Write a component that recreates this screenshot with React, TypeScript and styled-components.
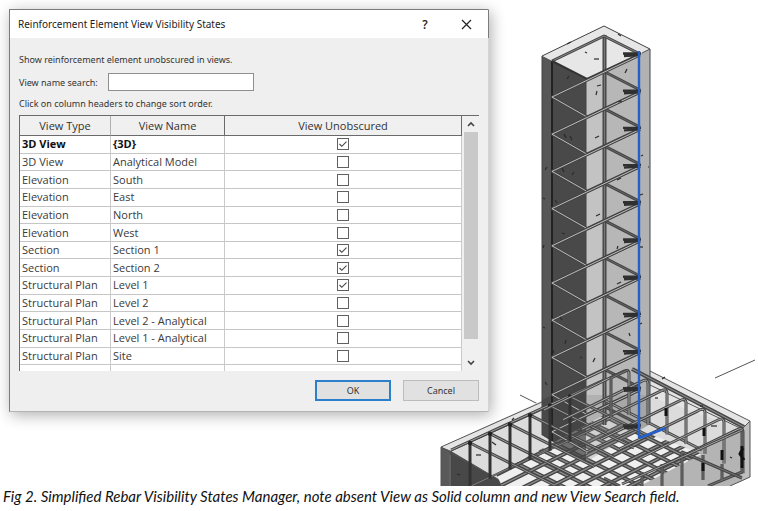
import React, { useState } from "react";
import styled, { createGlobalStyle } from "styled-components";

const GlobalStyle = createGlobalStyle`
  * { box-sizing: border-box; }
  body { margin: 0; background: #fff; }
`;

const Figure = styled.figure`
  margin: 0;
  overflow: hidden;
`;

const Stage = styled.div`
  display: grid;
  grid-template-columns: minmax(0, 1fr);
`;

const Drawing = styled.svg`
  grid-area: 1 / 1;
  justify-self: end;
  display: block;
  width: 358px;
  height: 486px;
`;

const Dialog = styled.section`
  grid-area: 1 / 1;
  align-self: start;
  z-index: 1;
  width: calc(100% - 18px);
  max-width: 480px;
  margin: 9px;
  border: 1px solid #7c7c7c;
  border-right-color: #d4d4d4;
  border-bottom-color: #b4b4b4;
  background: #efefef;
  box-shadow: 2px 3px 14px rgba(0, 0, 0, 0.32);
  font-family: "Noto Sans", "Open Sans", sans-serif;
  color: #333;
`;

const TitleBar = styled.header`
  display: flex;
  align-items: center;
  height: 28px;
  padding: 0 8px;
  margin-right: -1px;
  border-right: 1px solid #7c7c7c;
  background: #fff;
`;

const Title = styled.h1`
  flex: 1;
  margin: 0;
  font-size: 10px;
  line-height: 16px;
  font-weight: 400;
  color: #1c1c1c;
`;

const TitleButton = styled.button`
  display: grid;
  place-items: center;
  width: 28px;
  height: 24px;
  margin-left: 13px;
  padding: 0;
  border: 0;
  background: none;
  color: #222;
  font: 600 12px "Open Sans", sans-serif;
`;

const Body = styled.div`
  display: flex;
  flex-direction: column;
  padding: 14px 9px 10px;
`;

const Note = styled.p`
  margin: 0;
  font-size: 9px;
  line-height: 16px;
`;

const SearchRow = styled.div`
  display: flex;
  align-items: center;
  gap: 10px;
  height: 28px;
  font-size: 9px;
`;

const SearchInput = styled.input`
  width: 146px;
  height: 18px;
  padding: 0 4px;
  border: 1px solid #8f8f8f;
  background: #fff;
  font: inherit;
`;

const ListFrame = styled.div`
  display: flex;
  height: 256px;
  margin-top: 3px;
  overflow: hidden;
  border-top: 1px solid #6a6a6a;
  border-left: 1px solid #6a6a6a;
  background: #fff;
`;

const Table = styled.table`
  flex: 1;
  height: 267px;
  border-collapse: separate;
  border-spacing: 0;
  table-layout: fixed;
  font-family: "Open Sans", sans-serif;
  font-size: 11px;
  line-height: 14px;
`;

const HeadCell = styled.th<{ $width?: number; $light?: boolean }>`
  width: ${(p) => (p.$width ? `${p.$width}px` : "auto")};
  height: 20px;
  padding: 0;
  border-right: 1px solid ${(p) => (p.$light ? "#b0b0b0" : "#6a6a6a")};
  border-bottom: 1px solid #6a6a6a;
  background: #f0f0f0;
  font-weight: 400;
`;

const Row = styled.tr<{ $strong?: boolean }>`
  font-weight: ${(p) => (p.$strong ? 700 : 400)};
  color: ${(p) => (p.$strong ? "#111" : "#3a3a3a")};
`;

const Cell = styled.td<{ $center?: boolean }>`
  height: 17px;
  padding: 0 2px;
  border-right: 1px solid #cbcbcb;
  border-bottom: 1px solid #c6c6c6;
  text-align: ${(p) => (p.$center ? "center" : "left")};
  white-space: nowrap;
`;

const Check = styled.input`
  appearance: none;
  display: block;
  width: 12px;
  height: 12px;
  margin: 0 auto;
  border: 1px solid #606060;
  background: #fff;
  &:checked {
    background: #fff
      url("data:image/svg+xml,%3Csvg xmlns='http://www.w3.org/2000/svg' viewBox='0 0 10 10'%3E%3Cpath d='M1.5 5l2.3 2.3L8.5 2.6' fill='none' stroke='%23444' stroke-width='1.1'/%3E%3C/svg%3E");
  }
`;

const ScrollBar = styled.div`
  display: flex;
  flex-direction: column;
  width: 17px;
  padding: 0 1px 0 2px;
  background: #f0f0f0;
`;

const ScrollButton = styled.button`
  display: grid;
  place-items: center;
  height: 16px;
  padding: 0;
  border: 0;
  background: none;
`;

const ScrollTrack = styled.div`
  flex: 1;
`;

const ScrollThumb = styled.div`
  height: 93%;
  background: #c9c9c9;
`;

const Actions = styled.footer`
  display: flex;
  justify-content: flex-end;
  gap: 12px;
  margin-top: 9px;
`;

const ActionButton = styled.button<{ $primary?: boolean }>`
  width: 76px;
  height: 21px;
  padding: 0;
  border: ${(p) => (p.$primary ? "2px solid #2b7fcb" : "1px solid #bcbcbc")};
  background: #e1e1e1;
  color: #333;
  font: 9px "Noto Sans", sans-serif;
`;

const Caption = styled.figcaption`
  padding: 0 3px;
  font: italic 15px/20px Lato, "Open Sans", sans-serif;
  color: #111;
`;

const views = [
  { type: "3D View", name: "{3D}", on: true, strong: true },
  { type: "3D View", name: "Analytical Model", on: false },
  { type: "Elevation", name: "South", on: false },
  { type: "Elevation", name: "East", on: false },
  { type: "Elevation", name: "North", on: false },
  { type: "Elevation", name: "West", on: false },
  { type: "Section", name: "Section 1", on: true },
  { type: "Section", name: "Section 2", on: true },
  { type: "Structural Plan", name: "Level 1", on: true },
  { type: "Structural Plan", name: "Level 2", on: false },
  { type: "Structural Plan", name: "Level 2 - Analytical", on: false },
  { type: "Structural Plan", name: "Level 1 - Analytical", on: false },
  { type: "Structural Plan", name: "Site", on: false },
];

const range = (n: number) => Array.from({ length: n }, (_, i) => i);

function Bar({ d, w = 3, core = "#a2a2a2" }: { d: string; w?: number; core?: string }) {
  return (
    <>
      <path d={d} fill="none" stroke="#444" strokeWidth={w} strokeLinejoin="round" />
      <path d={d} fill="none" stroke={core} strokeWidth={w / 3} strokeLinejoin="round" />
    </>
  );
}

const specks = [
  [567, 44, 4, -2], [585, 52, 2, 1], [594, 59, 5, 0], [618, 34, 3, 2], [625, 73, 2, -4],
  [567, 79, 2, -3], [597, 86, 4, -1], [596, 95, 1, -4], [618, 102, 4, -1], [564, 134, 2, 4],
  [570, 136, 2, 4], [595, 138, 4, -2], [545, 170, 2, -3], [562, 168, 2, 4], [572, 175, 2, -3],
  [617, 180, 4, -2], [543, 198, 2, 1], [555, 200, 2, 3], [596, 216, 4, -2], [562, 233, 3, 1],
  [543, 248, 1, -3], [617, 249, 1, -3], [617, 284, 4, -2], [560, 317, 2, 3], [543, 327, 2, 1],
  [629, 333, 1, 3], [565, 344, 1, -4], [593, 362, 2, -4], [553, 350, 1, 3], [545, 382, 2, 3],
  [641, 156, 2, -1], [640, 195, 3, -1], [640, 247, 3, 0], [640, 324, 2, -1], [648, 167, 1, 0],
  [492, 442, 4, 3], [512, 420, 2, -2], [476, 455, 5, 0], [662, 379, 3, -2], [700, 406, 3, 0],
  [711, 426, 6, 0], [730, 457, 2, 1], [655, 398, 3, 0], [457, 474, 3, 1], [580, 357, 2, 1],
];

function RebarDrawing() {
  return (
    <Drawing viewBox="400 0 358 486" role="img" aria-label="Reinforced concrete column and footing">
      <defs>
        <clipPath id="floor">
          <path d="M502 486 L496 474 L602 416 L702 454 L640 486Z" />
        </clipPath>
      </defs>

      {/* level lines */}
      <path d="M520 395 L542 406 M715 378 L755 360" stroke="#555" fill="none" />

      {/* footing faces */}
      <path d="M441 447 L604 372 L650 371 L750 421 V477 L730 486 H441Z" fill="#e4e4e4" />
      <path d="M451 450 L604 380 L742 429 L620 486 H500Z" fill="#dcdcdc" />
      <path d="M441 447 L451 451 L510 486 H441Z" fill="#484848" />
      <path d="M441 447 L451 451 V486 H441Z" fill="#595959" />
      <path d="M742 429 L742 481 L730 486 H622Z" fill="#b4b4b4" />
      <path d="M742 429 L750 421 V477 L742 481Z" fill="#bebebe" />
      <path d="M441 486 V447 L542 402 M650 371 L750 421 V477 L730 486 M441 447 L510 486 M750 421 L742 429 L650 385" stroke="#555" fill="none" />
      <path d="M451 486 V451 L542 410" stroke="#444" fill="none" />

      {/* column faces */}
      <path d="M542 56 L604 26 L650 49 V424 L586 462 L542 435Z" fill="#b7b7b7" />
      <path d="M542 56 L604 26 L650 49 L587 79Z" fill="#e7e7e7" />
      <path d="M640 54 L650 49 V424 L640 430Z" fill="#b2b2b2" />
      <path d="M586 79 L604 70 V452 L586 462Z" fill="#c3c3c3" />
      <path d="M542 56 L586 79 V462 L542 435Z" fill="#494949" />
      <path d="M542 56 L552 61 V441 L542 435Z" fill="#575757" />
      <path d="M542 435 V56 L604 26 L650 49 V424 M586 79 V462" stroke="#444" fill="none" />
      <path d="M642 53 L650 49" stroke="#555" fill="none" />

      {/* bottom mesh */}
      <g clipPath="url(#floor)">
        <path d="M440 400 H760 V486 H440Z" fill="#efefef" />
        {range(18).map((i) => (
          <g key={i}>
            <Bar d={`M${310 + i * 26} 360 L${570 + i * 26} 490`} w={4} core="#8c8c8c" />
            <Bar d={`M${960 - i * 26} 360 L${700 - i * 26} 490`} w={4} core="#8c8c8c" />
          </g>
        ))}
      </g>
      <path d="M542 400 L586 380 V462 L542 435Z" fill="#444" opacity="0.75" />
      <path d="M586 395 H650 V424 L586 462Z" fill="#888" opacity="0.3" />

      {/* column cage */}
      <path d="M552 61 V441" stroke="#222" strokeWidth="2" />
      <Bar d="M604.5 35 V425" w={4} core="#777" />
      <Bar d="M552 61 L604 36 L640 54" w={3} core="#888" />
      <path d="M552 61 L587 79 L640 54" stroke="#333" strokeWidth="2" fill="none" />
      {range(10).map((i) => {
        const y = i * 37.2;
        return (
          <g key={i}>
            <Bar d={`M605 ${72 + y} L640 ${90 + y}`} core="#666" />
            <Bar d={`M587 ${117 + y} L552 ${97 + y} L640 ${55 + y}`} core="#bdbdbd" />
            <Bar d={`M587 ${117 + y} L640 ${92 + y}`} core="#999" />
          </g>
        );
      })}

      {/* left edge cage */}
      <Bar d="M451 450 L604 380" />
      <Bar d="M450 486 V455 M471 486 L600 426" w={2} />
      {range(6).map((i) => {
        const x = 470 + i * 20;
        const y = 443 - i * 9.3;
        return (
          <g key={i}>
            <Bar d={`M${x} ${y} L${x + 84} ${y + 42}`} w={3} core="#999" />
            <path d={`M${x} ${y} V${y + 45}`} stroke="#333" strokeWidth="3" />
            <circle cx={x} cy={y} r="2.2" fill="#222" />
          </g>
        );
      })}

      {/* right edge cage */}
      <Bar d="M632 369 L744 427" w={4} core="#888" />
      <Bar d="M604 400 L702 450" />
      {range(7).map((i) => {
        const x = 628 + i * 19;
        const y = 370 + i * 9.7;
        return (
          <Bar
            key={i}
            d={`M${x + 1} ${y + 45} V${y + 4} Q${x + 1} ${y - 2} ${x - 6} ${y + 2} L${x - 84} ${y + 40}`}
            w={3}
            core="#aaa"
          />
        );
      })}
      <Bar d="M611 417 V378 L628 370 M742 430 V472 L708 486 M703 455 V480 M722 464 V480" core="#777" />
      <Bar d="M642 486 V472 M662 486 V464 M682 486 V452 L742 478 M604 478 L620 486" w={3} core="#777" />
      <Bar d="M622 484 L742 430" w={3} />
      <path d="M742 446 V468 M743 448 L740 454 L744 460 M666 408 v8 M704 428 v8 M703 463 v8 M722 450 v10" stroke="#111" strokeWidth="3" fill="none" />

      {/* tie hooks */}
      {range(11).map((i) => (
        <path key={i} d={`M623 ${53.5 + i * 37.2} H641 M624 ${56 + i * 37.2} L640 ${55 + i * 37.2}`} stroke="#303030" strokeWidth="2.4" fill="none" />
      ))}
      <path d="M639 51 V438 M639 438 L666 428" stroke="#2460cc" strokeWidth="2.4" fill="none" />

      {specks.map(([x, y, dx, dy]) => (
        <path key={`${x}-${y}`} d={`M${x} ${y} l${dx} ${dy}`} stroke="#2b2b2b" strokeWidth="1.2" />
      ))}
    </Drawing>
  );
}

function Chevron({ down }: { down?: boolean }) {
  return (
    <svg width="8" height="6" viewBox="0 0 8 6" aria-hidden="true">
      <path d={down ? "M1 1l3 3 3-3" : "M1 5l3-3 3 3"} fill="none" stroke="#444" strokeWidth="1.6" />
    </svg>
  );
}

export default function App() {
  const [shown, setShown] = useState(views.map((v) => v.on));
  const toggle = (index: number) => setShown(shown.map((s, i) => (i === index ? !s : s)));

  return (
    <Figure>
      <GlobalStyle />
      <Stage>
        <RebarDrawing />
        <Dialog role="dialog" aria-labelledby="dialog-title">
          <TitleBar>
            <Title id="dialog-title">Reinforcement Element View Visibility States</Title>
            <TitleButton aria-label="Help">?</TitleButton>
            <TitleButton aria-label="Close">
              <svg width="11" height="11" viewBox="0 0 11 11" aria-hidden="true">
                <path d="M1 1l9 9M10 1l-9 9" stroke="#222" strokeWidth="1.2" />
              </svg>
            </TitleButton>
          </TitleBar>
          <Body>
            <Note>Show reinforcement element unobscured in views.</Note>
            <SearchRow>
              <label htmlFor="view-search">View name search:</label>
              <SearchInput id="view-search" type="text" />
            </SearchRow>
            <Note>Click on column headers to change sort order.</Note>
            <ListFrame>
              <Table>
                <thead>
                  <tr>
                    <HeadCell scope="col" $width={91} $light>View Type</HeadCell>
                    <HeadCell scope="col" $width={114}>View Name</HeadCell>
                    <HeadCell scope="col">View Unobscured</HeadCell>
                  </tr>
                </thead>
                <tbody>
                  {views.map((view, i) => (
                    <Row key={view.type + view.name} $strong={view.strong}>
                      <Cell>{view.type}</Cell>
                      <Cell>{view.name}</Cell>
                      <Cell $center>
                        <Check
                          type="checkbox"
                          aria-label={`${view.name} unobscured`}
                          checked={shown[i]}
                          onChange={() => toggle(i)}
                        />
                      </Cell>
                    </Row>
                  ))}
                  <Row>
                    <Cell />
                    <Cell />
                    <Cell />
                  </Row>
                </tbody>
              </Table>
              <ScrollBar>
                <ScrollButton aria-label="Scroll up"><Chevron /></ScrollButton>
                <ScrollTrack><ScrollThumb /></ScrollTrack>
                <ScrollButton aria-label="Scroll down"><Chevron down /></ScrollButton>
              </ScrollBar>
            </ListFrame>
            <Actions>
              <ActionButton $primary>OK</ActionButton>
              <ActionButton>Cancel</ActionButton>
            </Actions>
          </Body>
        </Dialog>
      </Stage>
      <Caption>
        Fig 2. Simplified Rebar Visibility States Manager, note absent View as Solid column and new View Search field.
      </Caption>
    </Figure>
  );
}
